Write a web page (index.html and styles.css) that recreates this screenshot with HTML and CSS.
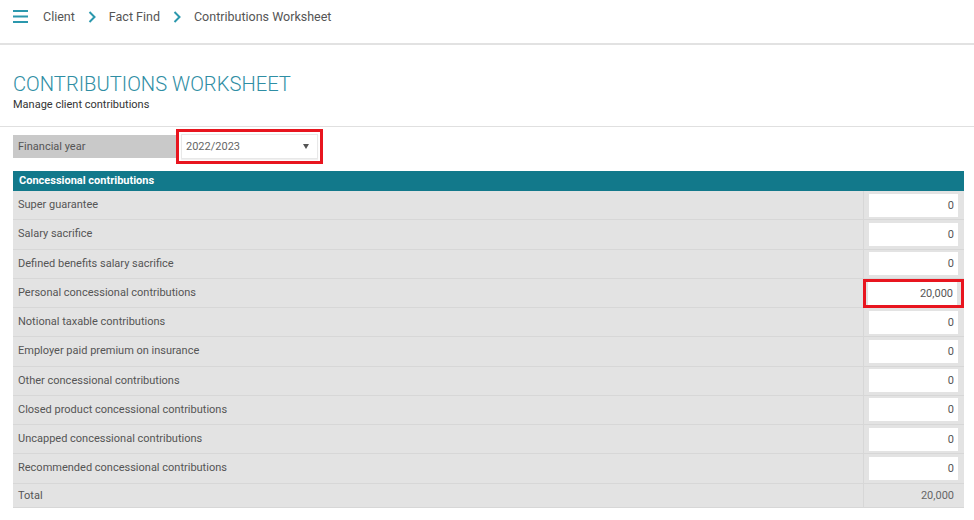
FILE: index.html
```html
<!DOCTYPE html>
<html>
<head>
<meta charset="utf-8">
<link rel="stylesheet" href="styles.css">
</head>
<body>
<header class="topbar">
  <svg class="menu" width="15" height="13" viewBox="0 0 15 13"><rect x="0" y="0" width="15" height="2" fill="#2b98ad"/><rect x="0" y="5.5" width="15" height="2" fill="#2b98ad"/><rect x="0" y="11" width="15" height="2" fill="#2b98ad"/></svg>
  <nav class="crumbs">
    <span class="crumb">Client</span>
    <svg class="chev" width="8" height="12" viewBox="0 0 8 12"><path d="M1.5 1 L6.5 6 L1.5 11" fill="none" stroke="#2b98ad" stroke-width="2"/></svg>
    <span class="crumb">Fact Find</span>
    <svg class="chev" width="8" height="12" viewBox="0 0 8 12"><path d="M1.5 1 L6.5 6 L1.5 11" fill="none" stroke="#2b98ad" stroke-width="2"/></svg>
    <span class="crumb">Contributions Worksheet</span>
  </nav>
</header>
<section class="titleblock">
  <h1 class="title">CONTRIBUTIONS WORKSHEET</h1>
  <p class="subtitle">Manage client contributions</p>
</section>
<main class="content">
  <div class="yearrow">
    <div class="yearlabel">Financial year</div>
    <div class="highlight">
      <div class="select"><span>2022/2023</span><span class="caret"></span></div>
    </div>
  </div>
  <div class="table">
    <div class="thead">Concessional contributions</div>
    <div class="row"><div class="lbl">Super guarantee</div><div class="val"><div class="inp">0</div></div></div>
    <div class="row"><div class="lbl">Salary sacrifice</div><div class="val"><div class="inp">0</div></div></div>
    <div class="row"><div class="lbl">Defined benefits salary sacrifice</div><div class="val"><div class="inp">0</div></div></div>
    <div class="row"><div class="lbl">Personal concessional contributions</div><div class="val marked"><div class="inp">20,000</div></div></div>
    <div class="row"><div class="lbl">Notional taxable contributions</div><div class="val"><div class="inp">0</div></div></div>
    <div class="row"><div class="lbl">Employer paid premium on insurance</div><div class="val"><div class="inp">0</div></div></div>
    <div class="row"><div class="lbl">Other concessional contributions</div><div class="val"><div class="inp">0</div></div></div>
    <div class="row"><div class="lbl">Closed product concessional contributions</div><div class="val"><div class="inp">0</div></div></div>
    <div class="row"><div class="lbl">Uncapped concessional contributions</div><div class="val"><div class="inp">0</div></div></div>
    <div class="row"><div class="lbl">Recommended concessional contributions</div><div class="val"><div class="inp">0</div></div></div>
    <div class="row total"><div class="lbl">Total</div><div class="val"><span class="totalnum">20,000</span></div></div>
  </div>
</main>
</body>
</html>
```
FILE: styles.css
```css
* { box-sizing: border-box; }
body {
  margin: 0;
  background: #ffffff;
  font-family: Roboto, "Liberation Sans", sans-serif;
  color: #555;
}
.topbar {
  height: 45px;
  border-bottom: 2px solid #e2e2e2;
  display: flex;
  align-items: flex-start;
  padding: 10px 0 0 13px;
}
.menu { display: block; }
.crumbs {
  display: flex;
  align-items: center;
  margin-left: 15px;
  margin-top: 0;
  gap: 13px;
  height: 14px;
}
.crumb { font-size: 12.5px; color: #555; line-height: 14px; }
.chev { display: block; }
.titleblock {
  padding: 27px 13px 0 13px;
  height: 82px;
  border-bottom: 1px solid #e0e0e0;
}
.title {
  margin: 0;
  font-size: 20.2px;
  font-weight: 300;
  color: #2f8ea4;
  line-height: 24px;
  letter-spacing: 0;
}
.subtitle {
  margin: 2px 0 0 0;
  font-size: 11px;
  color: #333;
  line-height: 14px;
}
.content { padding: 1px 10px 0 13px; }
.yearrow {
  display: flex;
  align-items: center;
  height: 36px;
}
.yearlabel {
  width: 163px;
  height: 23px;
  background: #c9c9c9;
  font-size: 11px;
  line-height: 23px;
  padding-left: 5px;
  color: #555;
}
.highlight {
  border: 3px solid #e8151f;
  padding: 2px;
}
.select {
  width: 137px;
  height: 25px;
  background: #fff;
  border: 1px solid #e8e8e8;
  box-shadow: 0 1px 1px rgba(0,0,0,0.06);
  display: flex;
  align-items: center;
  justify-content: space-between;
  padding: 0 8px 0 4px;
  font-size: 11px;
  color: #666;
}
.caret {
  width: 0; height: 0;
  border-left: 3.5px solid transparent;
  border-right: 3.5px solid transparent;
  border-top: 5px solid #555;
}
.table { margin-top: 7px; }
.thead {
  height: 20px;
  background: #12798b;
  color: #fff;
  font-weight: 700;
  font-size: 11px;
  line-height: 20px;
  padding-left: 6px;
}
.row {
  display: flex;
  height: 29.25px;
  background: #e3e3e3;
  border-bottom: 1px solid #d7d7d7;
}
.lbl {
  flex: 1;
  font-size: 11px;
  line-height: 28px;
  padding-left: 5px;
  color: #555;
}
.val {
  width: 101px;
  border-left: 1px solid #d7d7d7;
  display: flex;
  align-items: center;
  padding: 0 6px 0 5px;
}
.val.marked {
  border: 3px solid #e8151f;
  padding: 0 3px 0 2px;
  margin-bottom: -1px;
  height: 29.25px;
}
.inp {
  width: 89px;
  height: 23px;
  background: #fff;
  font-size: 11px;
  line-height: 23px;
  text-align: right;
  padding-right: 4px;
  color: #555;
}
.row.total { height: 24px; }
.row.total .lbl { line-height: 23px; }
.totalnum {
  width: 100%;
  text-align: right;
  font-size: 11px;
  padding-right: 4px;
  color: #666;
}
```
